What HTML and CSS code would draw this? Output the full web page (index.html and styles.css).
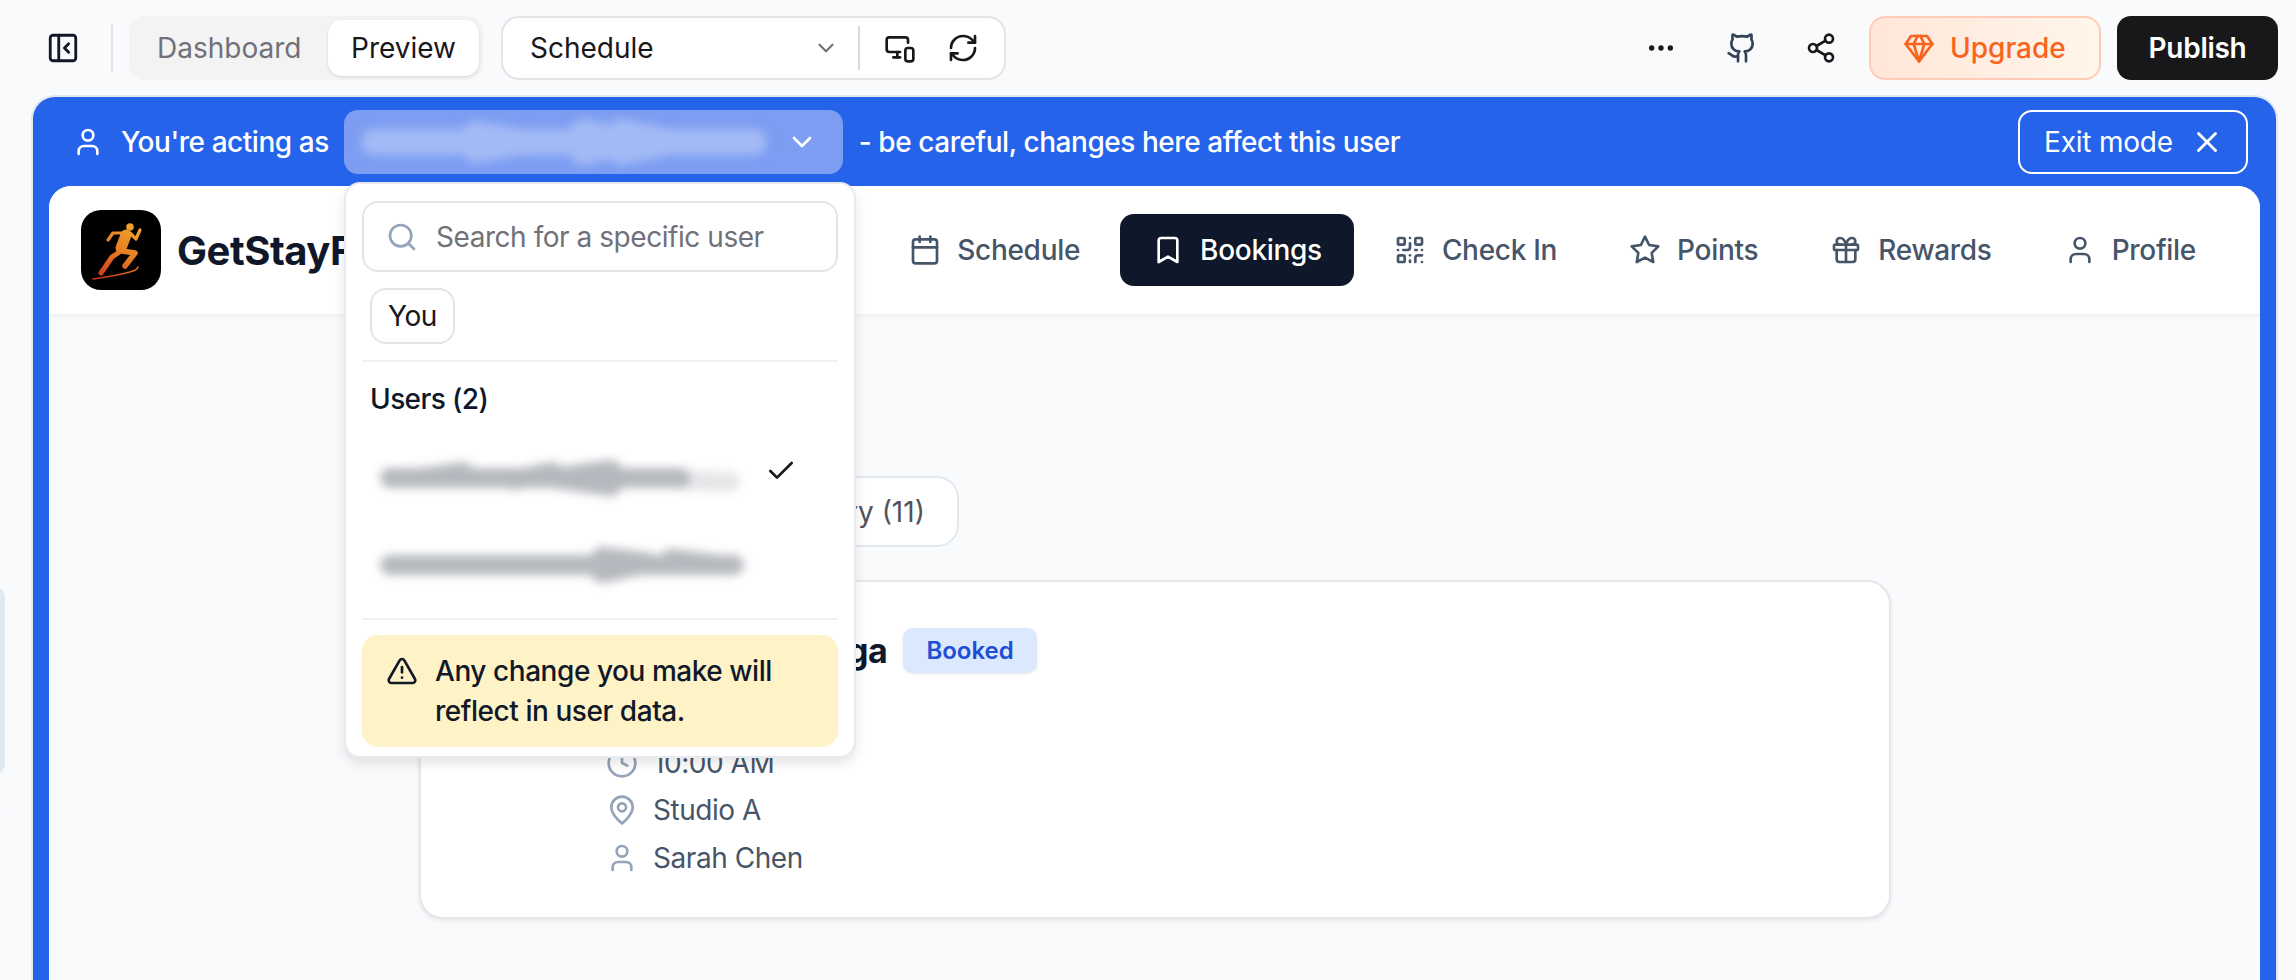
FILE: index.html
```html
<!DOCTYPE html>
<html lang="en">
<head>
  <meta charset="UTF-8" />
  <title>GetStayFit - Preview</title>
  <link rel="stylesheet" href="styles.css">
</head>
<body>
  <!-- Icons -->
  <svg class="sprite" xmlns="http://www.w3.org/2000/svg">
    <symbol id="i-panel" viewBox="0 0 24 24"><rect x="3" y="3" width="18" height="18" rx="2"/><path d="M9 3v18"/><path d="m16 15-3-3 3-3"/></symbol>
    <symbol id="i-chevron" viewBox="0 0 24 24"><path d="m6 9 6 6 6-6"/></symbol>
    <symbol id="i-devices" viewBox="0 0 24 24"><path d="M18 8V6a2 2 0 0 0-2-2H4a2 2 0 0 0-2 2v7a2 2 0 0 0 2 2h8"/><path d="M10 19v-3.96 3.15"/><path d="M7 19h5"/><rect x="16" y="12" width="6" height="10" rx="2"/></symbol>
    <symbol id="i-refresh" viewBox="0 0 24 24"><path d="M3 12a9 9 0 0 1 9-9 9.75 9.75 0 0 1 6.74 2.74L21 8"/><path d="M21 3v5h-5"/><path d="M21 12a9 9 0 0 1-9 9 9.75 9.75 0 0 1-6.74-2.74L3 16"/><path d="M8 16H3v5"/></symbol>
    <symbol id="i-github" viewBox="0 0 24 24"><path d="M15 22v-4a4.8 4.8 0 0 0-1-3.5c3 0 6-2 6-5.5.08-1.25-.27-2.48-1-3.5.28-1.15.28-2.35 0-3.5 0 0-1 0-3 1.5-2.64-.5-5.36-.5-8 0C6 2 5 2 5 2c-.3 1.15-.3 2.35 0 3.5A5.403 5.403 0 0 0 4 9c0 3.5 3 5.5 6 5.5-.39.49-.68 1.05-.85 1.65-.17.6-.22 1.23-.15 1.85v4"/><path d="M9 18c-4.51 2-5-2-7-2"/></symbol>
    <symbol id="i-share" viewBox="0 0 24 24"><circle cx="18" cy="5" r="3"/><circle cx="6" cy="12" r="3"/><circle cx="18" cy="19" r="3"/><path d="m8.59 13.51 6.83 3.98"/><path d="m15.41 6.51-6.82 3.98"/></symbol>
    <symbol id="i-gem" viewBox="0 0 24 24"><path d="M6 3h12l4 6-10 13L2 9Z"/><path d="M11 3 8 9l4 13 4-13-3-6"/><path d="M2 9h20"/></symbol>
    <symbol id="i-user" viewBox="0 0 24 24"><path d="M19 21v-2a4 4 0 0 0-4-4H9a4 4 0 0 0-4 4v2"/><circle cx="12" cy="7" r="4"/></symbol>
    <symbol id="i-x" viewBox="0 0 24 24"><path d="M18 6 6 18"/><path d="m6 6 12 12"/></symbol>
    <symbol id="i-calendar" viewBox="0 0 24 24"><rect x="3" y="4" width="18" height="18" rx="2"/><path d="M16 2v4"/><path d="M8 2v4"/><path d="M3 10h18"/></symbol>
    <symbol id="i-bookmark" viewBox="0 0 24 24"><path d="m19 21-7-4-7 4V5a2 2 0 0 1 2-2h10a2 2 0 0 1 2 2v16z"/></symbol>
    <symbol id="i-qr" viewBox="0 0 24 24"><rect x="3" y="3" width="5" height="5" rx="1"/><rect x="16" y="3" width="5" height="5" rx="1"/><rect x="3" y="16" width="5" height="5" rx="1"/><path d="M21 16h-3a2 2 0 0 0-2 2v3"/><path d="M21 21v.01"/><path d="M12 7v3a2 2 0 0 1-2 2H7"/><path d="M3 12h.01"/><path d="M12 3h.01"/><path d="M12 16v.01"/><path d="M16 12h1"/><path d="M21 12v.01"/><path d="M12 21v-1"/></symbol>
    <symbol id="i-star" viewBox="0 0 24 24"><polygon points="12 2 15.09 8.26 22 9.27 17 14.14 18.18 21.02 12 17.77 5.82 21.02 7 14.14 2 9.27 8.91 8.26 12 2"/></symbol>
    <symbol id="i-gift" viewBox="0 0 24 24"><rect x="3" y="8" width="18" height="4" rx="1"/><path d="M12 8v13"/><path d="M19 12v7a2 2 0 0 1-2 2H7a2 2 0 0 1-2-2v-7"/><path d="M7.5 8a2.5 2.5 0 0 1 0-5A4.8 8 0 0 1 12 8a4.8 8 0 0 1 4.5-5 2.5 2.5 0 0 1 0 5"/></symbol>
    <symbol id="i-clock" viewBox="0 0 24 24"><circle cx="12" cy="12" r="10"/><path d="M12 6v6l4 2"/></symbol>
    <symbol id="i-pin" viewBox="0 0 24 24"><path d="M20 10c0 6-8 12-8 12s-8-6-8-12a8 8 0 0 1 16 0Z"/><circle cx="12" cy="10" r="3"/></symbol>
    <symbol id="i-search" viewBox="0 0 24 24"><circle cx="11" cy="11" r="8"/><path d="m21 21-4.3-4.3"/></symbol>
    <symbol id="i-alert" viewBox="0 0 24 24"><path d="m21.73 18-8-14a2 2 0 0 0-3.48 0l-8 14A2 2 0 0 0 4 21h16a2 2 0 0 0 1.73-3"/><path d="M12 9v4"/><path d="M12 17h.01"/></symbol>
    <symbol id="i-check" viewBox="0 0 24 24"><path d="M20 6 9 17l-5-5"/></symbol>
    <symbol id="i-dots" viewBox="0 0 24 24"><circle cx="12" cy="12" r="1"/><circle cx="19" cy="12" r="1"/><circle cx="5" cy="12" r="1"/></symbol>
  </svg>

  <!-- Edge of the panel behind -->
  <div class="edge-panel"></div>

  <!-- Top bar -->
  <header class="topbar">
    <svg class="ico ico-panel"><use href="#i-panel"/></svg>
    <span class="vline"></span>
    <div class="seg">
      <span class="seg-item">Dashboard</span>
      <span class="seg-item seg-on">Preview</span>
    </div>
    <div class="route">
      <span class="route-name">Schedule</span>
      <svg class="ico ico-route-chev"><use href="#i-chevron"/></svg>
      <span class="route-line"></span>
      <svg class="ico ico-device"><use href="#i-devices"/></svg>
      <svg class="ico ico-refresh"><use href="#i-refresh"/></svg>
    </div>
    <div class="top-right">
      <svg class="ico ico-dots"><use href="#i-dots"/></svg>
      <svg class="ico ico-github"><use href="#i-github"/></svg>
      <svg class="ico ico-share"><use href="#i-share"/></svg>
      <button class="upgrade"><svg class="ico ico-gem"><use href="#i-gem"/></svg>Upgrade</button>
      <button class="publish">Publish</button>
    </div>
  </header>

  <!-- Blue frame -->
  <div class="frame">
    <div class="banner">
      <svg class="ico ico-banner"><use href="#i-user"/></svg>
      <span>You're acting as</span>
      <div class="who">
        <svg class="smudge smudge-light" viewBox="0 0 400 40" preserveAspectRatio="none"><path d="M6 20H396"/><path d="M110 12L160 20L110 28M220 10L270 20L220 30M260 10L310 20L260 30"/></svg>
        <svg class="ico ico-who"><use href="#i-chevron"/></svg>
      </div>
      <span>- be careful, changes here affect this user</span>
      <button class="exit">Exit mode<svg class="ico ico-exit"><use href="#i-x"/></svg></button>
    </div>

    <div class="app">
      <nav class="nav">
        <div class="brand">
          <svg class="logo" viewBox="0 0 80 80">
            <defs>
              <linearGradient id="run" x1="50" y1="14" x2="18" y2="68" gradientUnits="userSpaceOnUse">
                <stop offset="0" stop-color="#f2a12a"/>
                <stop offset="0.5" stop-color="#e57c25"/>
                <stop offset="1" stop-color="#c9361c"/>
              </linearGradient>
            </defs>
            <rect width="80" height="80" rx="20" fill="#000"/>
            <g fill="none" stroke="url(#run)" stroke-linecap="round" stroke-linejoin="round">
              <circle cx="49" cy="17" r="3.8" fill="url(#run)" stroke="none"/>
              <path d="M45 25L40 38" stroke-width="11"/>
              <path d="M49 23L55 29L59 20" stroke-width="3.2"/>
              <path d="M42 23L32 23L27 30" stroke-width="3.2"/>
              <path d="M41 41L54 43L44 56" stroke-width="5.5"/>
              <path d="M37 43L31 47L20 63" stroke-width="5"/>
              <path d="M12 69Q40 65 52 61Q56 60 57 57" stroke-width="1.4"/>
            </g>
          </svg>
          <span class="brand-name">GetStayFit</span>
        </div>
        <div class="nav-items">
          <a class="nav-item"><svg class="ico"><use href="#i-calendar"/></svg>Schedule</a>
          <a class="nav-item nav-on"><svg class="ico"><use href="#i-bookmark"/></svg>Bookings</a>
          <a class="nav-item"><svg class="ico"><use href="#i-qr"/></svg>Check In</a>
          <a class="nav-item"><svg class="ico"><use href="#i-star"/></svg>Points</a>
          <a class="nav-item"><svg class="ico"><use href="#i-gift"/></svg>Rewards</a>
          <a class="nav-item"><svg class="ico"><use href="#i-user"/></svg>Profile</a>
        </div>
      </nav>

      <main class="main">
        <div class="tabs"><span class="tab">History (11)</span></div>
        <section class="card">
          <div class="card-head">
            <h3>Yoga</h3>
            <span class="badge">Booked</span>
          </div>
          <div class="meta"><svg class="ico"><use href="#i-clock"/></svg>10:00 AM</div>
          <div class="meta"><svg class="ico"><use href="#i-pin"/></svg>Studio A</div>
          <div class="meta"><svg class="ico"><use href="#i-user"/></svg>Sarah Chen</div>
        </section>
      </main>
    </div>

    <!-- Dropdown -->
    <div class="pop">
      <div class="search">
        <svg class="ico ico-search"><use href="#i-search"/></svg>
        <span>Search for a specific user</span>
      </div>
      <span class="you">You</span>
      <hr class="pop-line">
      <div class="pop-title">Users (2)</div>
      <div class="pop-rows">
        <div class="pop-row">
          <svg class="smudge" viewBox="0 0 360 40" preserveAspectRatio="none"><path d="M6 20H300"/><path d="M300 22L350 24" class="smudge-fade"/><path d="M40 20L80 14M130 22L170 14M170 20L230 12M170 20L230 28"/></svg>
          <svg class="ico ico-check"><use href="#i-check"/></svg>
        </div>
        <div class="pop-row">
          <svg class="smudge" viewBox="0 0 360 40" preserveAspectRatio="none"><path d="M6 22H354"/><path d="M220 14L270 20L220 30M290 16L340 22"/></svg>
        </div>
      </div>
      <hr class="pop-line pop-line-low">
      <div class="warn">
        <svg class="ico ico-alert"><use href="#i-alert"/></svg>
        <span>Any change you make will reflect in user data.</span>
      </div>
    </div>
  </div>
</body>
</html>
```

FILE: styles.css
```css
html, body {
  margin: 0;
  padding: 0;
  height: 980px;
  overflow: hidden;
}

body {
  position: relative;
  display: flex;
  flex-direction: column;
  background: #f9fafc;
  font-family: 'Inter', 'Liberation Sans', sans-serif;
  font-size: 28px;
  color: #0f172a;
}

.sprite {
  display: none;
}

.ico {
  width: 32px;
  height: 32px;
  flex: none;
  fill: none;
  stroke: currentColor;
  stroke-width: 2;
  stroke-linecap: round;
  stroke-linejoin: round;
}

button {
  font: inherit;
  cursor: pointer;
}

.edge-panel {
  position: absolute;
  left: -20px;
  top: 586px;
  width: 25px;
  height: 234px;
  background: #e2e8f0;
  border-radius: 0 12px 12px 0;
  box-shadow: inset 0 -45px 0 #f9fafc;
}

/* Top bar */
.topbar {
  display: flex;
  align-items: center;
  height: 64px;
  margin-top: 16px;
  padding-left: 46px;
  flex: none;
}

.ico-panel {
  width: 34px;
  height: 34px;
  color: #111827;
}

.vline {
  width: 2px;
  height: 48px;
  margin: 0 16px 0 31px;
  background: #e2e3e6;
}

.seg {
  display: flex;
  height: 64px;
  width: 354px;
  box-sizing: border-box;
  padding: 4px;
  background: #f3f3f4;
  border-radius: 16px;
}

.seg-item {
  display: flex;
  align-items: center;
  padding: 0 24px;
  color: #71717a;
  font-weight: 400;
}

.seg-on {
  margin-left: auto;
  padding: 0 23px;
  background: #fff;
  color: #18181b;
  border-radius: 14px;
  box-shadow: 0 1px 3px rgba(0, 0, 0, 0.12);
}

.route {
  display: flex;
  align-items: center;
  width: 505px;
  height: 64px;
  box-sizing: border-box;
  margin-left: 18px;
  padding-left: 27px;
  background: #fff;
  border: 2px solid #e4e4e9;
  border-radius: 18px;
}

.route-name {
  width: 283px;
  color: #18181b;
}

.ico-route-chev {
  width: 26px;
  height: 26px;
  color: #71717a;
}

.route-line {
  width: 2px;
  height: 44px;
  margin: 0 24px 0 19px;
  background: #d9d9de;
}

.ico-device {
  color: #18181b;
}

.ico-refresh {
  margin-left: 31px;
  color: #18181b;
}

.top-right {
  display: flex;
  align-items: center;
  margin-left: auto;
  margin-right: 18px;
}

.ico-dots {
  color: #18181b;
}

.ico-github {
  margin-left: 49px;
  color: #334155;
}

.ico-share {
  margin-left: 47px;
  color: #18181b;
}

.upgrade {
  display: flex;
  align-items: center;
  gap: 15px;
  width: 232px;
  height: 64px;
  box-sizing: border-box;
  margin-left: 32px;
  padding-left: 32px;
  color: #f9631c;
  font-weight: 500;
  background: linear-gradient(90deg, #ffe6d9, #fff6ea);
  border: 2px solid #ffcbb6;
  border-radius: 16px;
}

.ico-gem {
  color: #f9631c;
}

.publish {
  width: 161px;
  height: 64px;
  margin-left: 16px;
  color: #fff;
  font-weight: 600;
  letter-spacing: -0.3px;
  background: #18181b;
  border: none;
  border-radius: 14px;
}

/* Blue frame */
.frame {
  position: relative;
  flex: 1;
  display: flex;
  flex-direction: column;
  width: 2243px;
  box-sizing: border-box;
  margin: 17px 0 0 33px;
  padding: 0 16px;
  background: #2563eb;
  border-radius: 22px 22px 0 0;
  box-shadow: 0 0 0 2px #e2e8f0;
  letter-spacing: -0.45px;
}

.banner {
  display: flex;
  align-items: center;
  height: 89px;
  flex: none;
  color: #fff;
  font-weight: 500;
}

.ico-banner {
  margin-left: 23px;
  margin-right: 17px;
}

.who {
  display: flex;
  align-items: center;
  width: 499px;
  height: 64px;
  box-sizing: border-box;
  margin: 0 16px 0 15px;
  padding: 0 25px 0 24px;
  background: #7c9df2;
  border-radius: 14px;
}

.ico-who {
  margin-left: auto;
  color: #fff;
}

.smudge {
  width: 356px;
  height: 40px;
  overflow: visible;
  fill: none;
  stroke: #aeb1b7;
  stroke-width: 20;
  stroke-linecap: round;
  filter: blur(5px);
  opacity: 0.9;
}

.smudge-fade {
  opacity: 0.35;
}

.smudge-light {
  width: 390px;
  stroke: #a3baf5;
  stroke-width: 26;
  opacity: 1;
}

.exit {
  display: flex;
  align-items: center;
  justify-content: space-between;
  width: 230px;
  height: 64px;
  box-sizing: border-box;
  margin-left: auto;
  margin-right: 12px;
  padding: 0 24px 0 24px;
  color: #fff;
  font-weight: 400;
  letter-spacing: -0.2px;
  background: transparent;
  border: 2px solid #fff;
  border-radius: 14px;
}

.ico-exit {
  width: 34px;
  height: 34px;
  margin-right: -2px;
}

.app {
  flex: 1;
  display: flex;
  flex-direction: column;
  background: #f9fafc;
  border-radius: 22px 22px 0 0;
  overflow: hidden;
}

.nav {
  display: flex;
  align-items: center;
  height: 128px;
  flex: none;
  background: #fff;
  box-shadow: 0 2px 4px rgba(15, 23, 42, 0.06);
}

.brand {
  display: flex;
  align-items: center;
  gap: 16px;
  padding-left: 32px;
}

.logo {
  width: 80px;
  height: 80px;
}

.brand-name {
  font-size: 40px;
  font-weight: 700;
  color: #0f172a;
}

.nav-items {
  display: flex;
  gap: 8px;
  margin-left: auto;
  margin-right: 32px;
}

.nav-item {
  display: flex;
  align-items: center;
  gap: 16px;
  height: 72px;
  padding: 0 32px;
  color: #475569;
  font-weight: 500;
  letter-spacing: -0.3px;
  border-radius: 14px;
}

.nav-on {
  color: #fff;
  background: #0f172a;
}

.main {
  flex: 1;
  padding: 162px 0 0 370px;
}

.tabs {
  display: flex;
  margin-left: 331px;
}

.tab {
  display: flex;
  align-items: center;
  width: 209px;
  height: 71px;
  box-sizing: border-box;
  padding-left: 27px;
  color: #52525b;
  letter-spacing: 0;
  background: #fff;
  border: 2px solid #e2e8f0;
  border-radius: 22px;
}

.card {
  width: 1472px;
  height: 339px;
  box-sizing: border-box;
  margin-top: 33px;
  padding: 46px 0 0 185px;
  background: #fff;
  border: 2px solid #e5e7eb;
  border-radius: 24px;
  box-shadow: 0 2px 4px rgba(0, 0, 0, 0.08);
}

.card-head {
  display: flex;
  align-items: center;
  gap: 16px;
  height: 44px;
  padding-left: 200px;
  margin-bottom: 67px;
}

.card-head h3 {
  margin: 0;
  font-size: 34px;
  font-weight: 700;
  color: #0f172a;
}

.badge {
  display: flex;
  align-items: center;
  height: 45px;
  padding: 0 23px;
  color: #1d4ed8;
  font-size: 24px;
  font-weight: 600;
  letter-spacing: 0;
  background: #dbe8fe;
  border-radius: 10px;
  box-shadow: 0 1px 3px rgba(0, 0, 0, 0.1);
}

.meta {
  display: flex;
  align-items: center;
  gap: 15px;
  height: 47.5px;
  color: #475569;
}

.meta .ico {
  color: #94a3b8;
}

/* Dropdown */
.pop {
  position: absolute;
  left: 311px;
  top: 85px;
  width: 512px;
  height: 576px;
  box-sizing: border-box;
  padding: 17px 16px 0;
  background: #fff;
  border: 2px solid #e8e9ee;
  border-radius: 16px;
  box-shadow: 0 6px 12px rgba(0, 0, 0, 0.1);
}

.search {
  display: flex;
  align-items: center;
  gap: 18px;
  height: 71px;
  box-sizing: border-box;
  padding-left: 22px;
  color: #71717a;
  border: 2px solid #e4e4e9;
  border-radius: 16px;
}

.ico-search {
  width: 32px;
  height: 32px;
  color: #94a3b8;
}

.you {
  display: inline-flex;
  align-items: center;
  height: 56px;
  box-sizing: border-box;
  margin: 16px 0 0 8px;
  padding: 0 16px;
  color: #18181b;
  border: 2px solid #e4e4e9;
  border-radius: 16px;
}

.pop-line {
  height: 2px;
  margin: 16px 0 0;
  background: #f1f1f3;
  border: none;
}

.pop-title {
  display: flex;
  align-items: center;
  height: 40px;
  margin: 17px 0 0 8px;
  font-weight: 500;
  letter-spacing: -0.6px;
}

.pop-rows {
  margin-top: 16px;
}

.pop-row {
  display: flex;
  align-items: center;
  height: 85px;
  padding-left: 22px;
}

.ico-check {
  margin-left: 25px;
  margin-bottom: 14px;
  color: #18181b;
}

.pop-line-low {
  margin-top: 13px;
}

.warn {
  display: flex;
  gap: 17px;
  width: 476px;
  height: 112px;
  box-sizing: border-box;
  margin-top: 15px;
  padding: 16px 20px 0 24px;
  color: #111827;
  font-weight: 500;
  line-height: 40px;
  background: #fef3c7;
  border-radius: 16px;
}

.ico-alert {
  width: 32px;
  height: 32px;
  margin-top: 4px;
}
```
